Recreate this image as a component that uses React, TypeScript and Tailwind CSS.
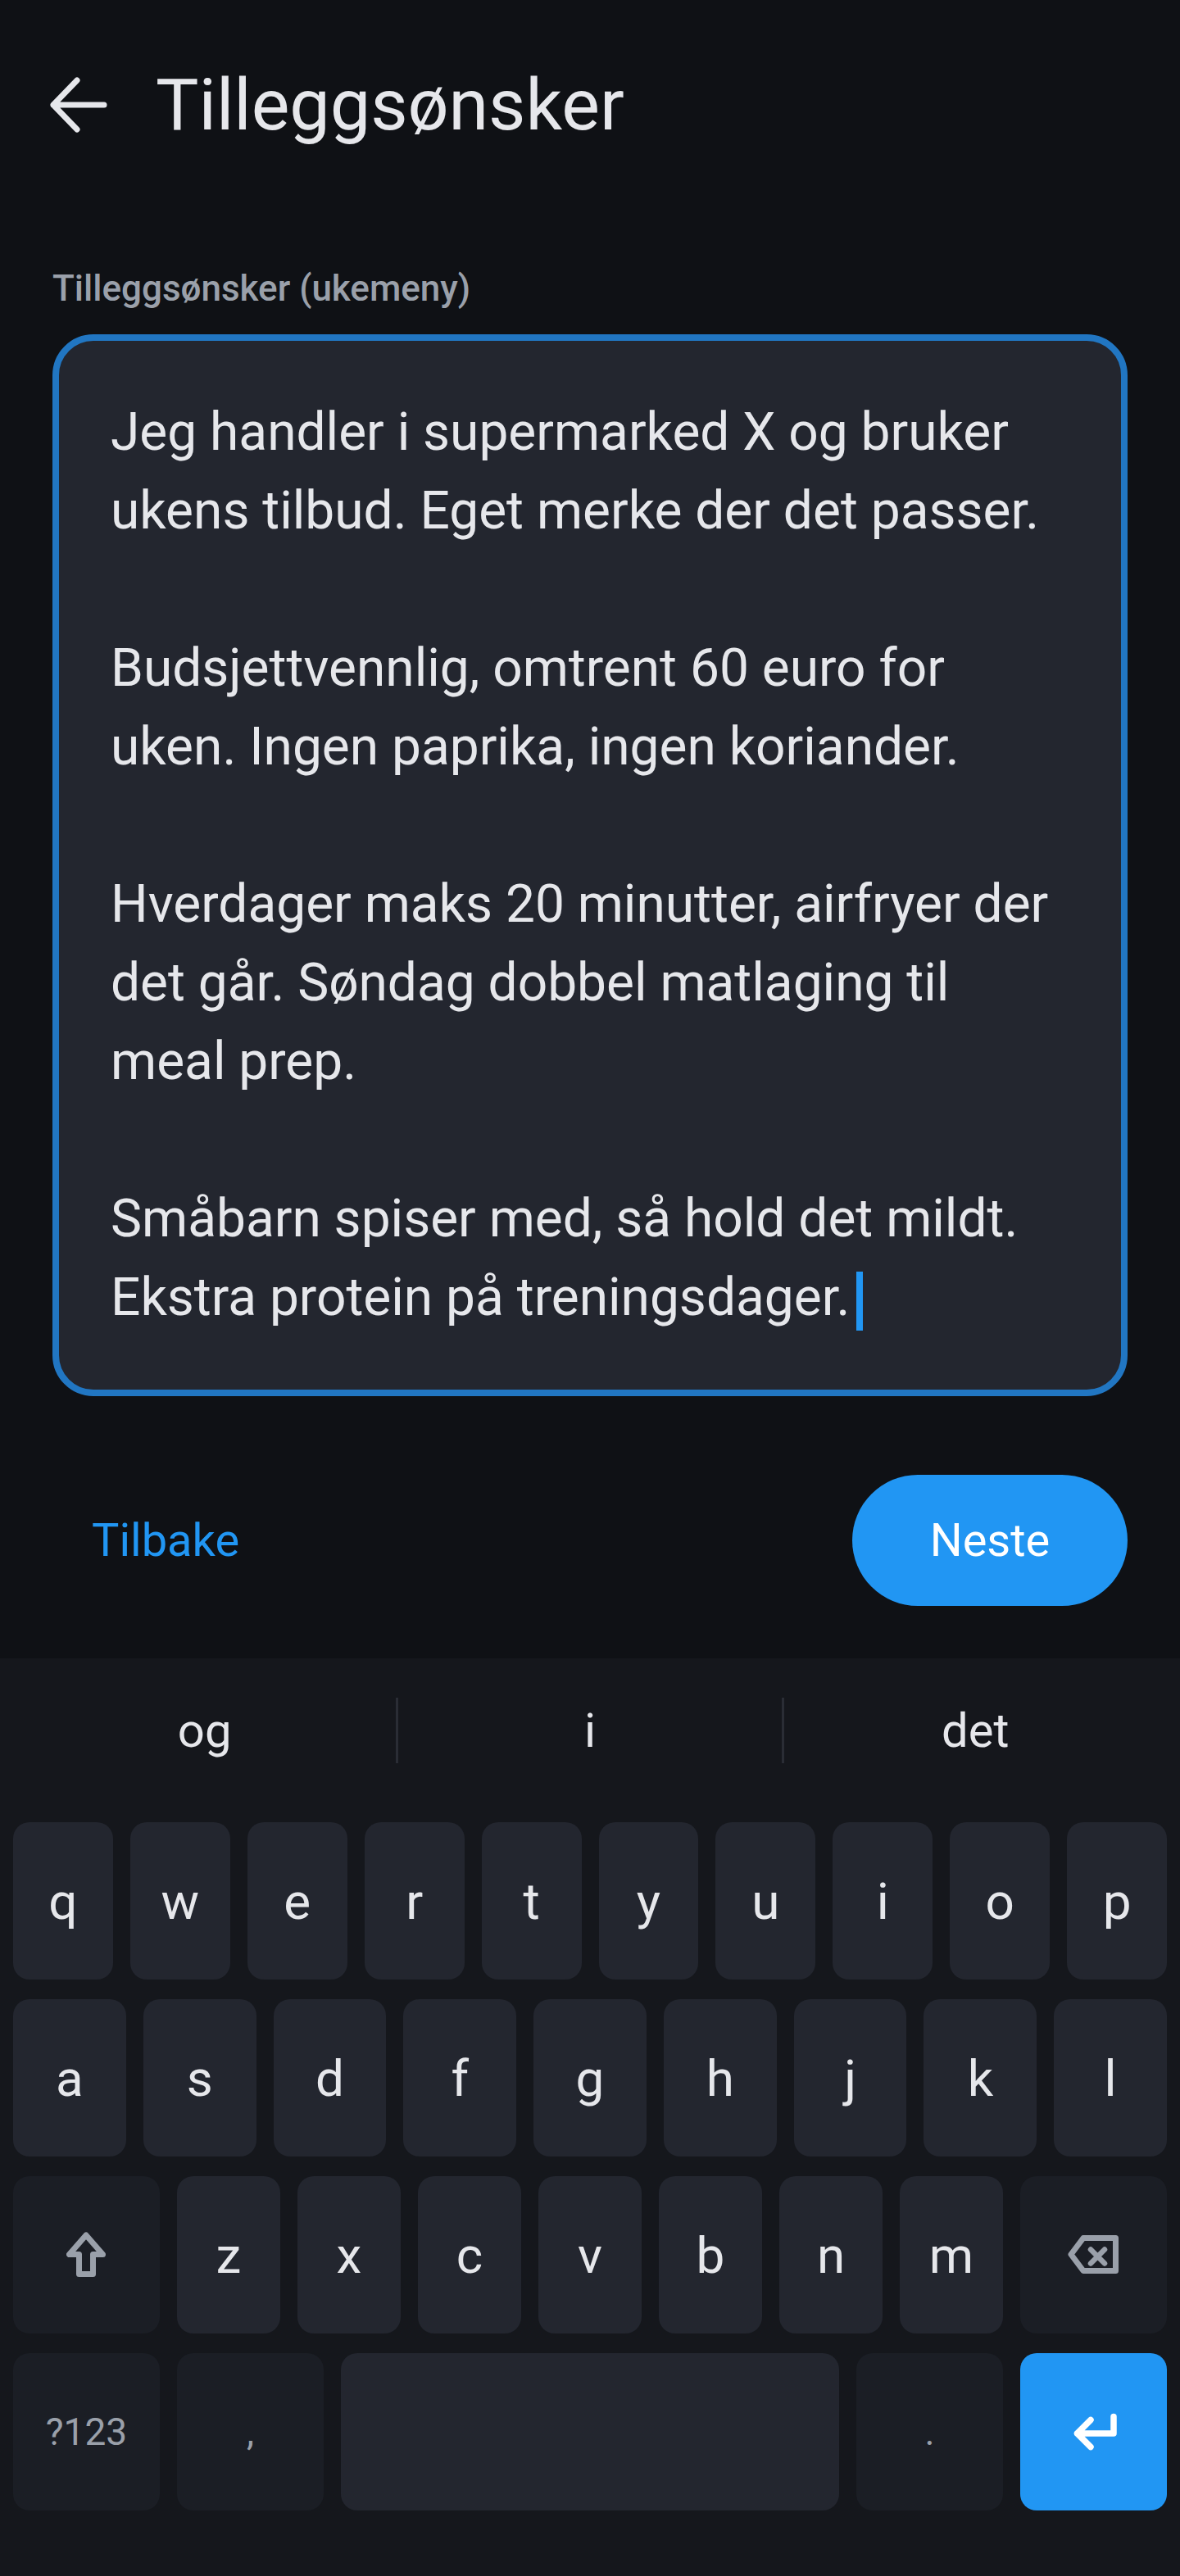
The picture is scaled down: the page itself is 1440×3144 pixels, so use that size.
import { useState } from "react"

const row1 = ["q", "w", "e", "r", "t", "y", "u", "i", "o", "p"]
const row2 = ["a", "s", "d", "f", "g", "h", "j", "k", "l"]
const row3 = ["z", "x", "c", "v", "b", "n", "m"]

const noteText = `Jeg handler i supermarked X og bruker
ukens tilbud. Eget merke der det passer.

Budsjettvennlig, omtrent 60 euro for
uken. Ingen paprika, ingen koriander.

Hverdager maks 20 minutter, airfryer der
det går. Søndag dobbel matlaging til
meal prep.

Småbarn spiser med, så hold det mildt.
Ekstra protein på treningsdager.`

function Key({ label }: { label: string }) {
  return (
    <div className="flex-1 h-full rounded-[20px] bg-[#23262f] flex items-center justify-center text-[62px] text-[#e6e7eb]">
      {label}
    </div>
  )
}

function ShiftIcon() {
  return (
    <svg width="50" height="57" viewBox="0 0 50 57" fill="none">
      <path
        d="M24 4 L3.5 27.5 H15.5 V51.5 H32.5 V27.5 H44.5 Z"
        stroke="#9aa0aa"
        strokeWidth="7"
        strokeLinejoin="round"
      />
    </svg>
  )
}

function BackspaceIcon() {
  return (
    <svg width="64" height="48" viewBox="0 0 64 48" fill="none">
      <path
        d="M19 3.5 H58.5 V43.5 H19 L4 23.5 Z"
        stroke="#9aa0aa"
        strokeWidth="7"
        strokeLinejoin="round"
      />
      <path
        d="M28 17.5 L45 34.5 M45 17.5 L28 34.5"
        stroke="#9aa0aa"
        strokeWidth="6.5"
        strokeLinecap="round"
      />
    </svg>
  )
}

function EnterIcon() {
  return (
    <svg width="56" height="48" viewBox="0 0 56 48" fill="none" className="ml-[5px]">
      <path
        d="M50 5.5 V26 H5.5 M22 9.5 L5.5 26 L22 42.5"
        stroke="#ffffff"
        strokeWidth="7.5"
        strokeLinecap="round"
        strokeLinejoin="round"
      />
    </svg>
  )
}

export default function App() {
  const [text] = useState(noteText)

  return (
    <div className="w-full min-h-[3144px] bg-[#0f1115] font-[Roboto,sans-serif] flex flex-col">
      {/* Top bar */}
      <div className="h-[256px] flex items-center px-[48px]">
        <button className="w-[96px] h-[96px] flex items-center justify-center">
          <svg width="70" height="70" viewBox="0 0 70 70" fill="none">
            <path
              d="M66 35 H4 M33 5 L4 35 L33 65"
              stroke="#e6e7eb"
              strokeWidth="7"
              strokeLinecap="round"
              strokeLinejoin="round"
            />
          </svg>
        </button>
        <h1 className="ml-[46px] text-[88px] leading-[88px] text-[#e6e7eb] font-normal">Tilleggsønsker</h1>
      </div>

      {/* Form */}
      <div className="px-16">
        <label className="block mt-16 text-[44px] leading-[64px] text-[#9aa0aa] font-medium">
          Tilleggsønsker (ukemeny)
        </label>

        <div className="mt-6 rounded-[50px] border-[8px] border-[#2176c2] bg-[#23262f] px-[63px] py-[64px]">
          <div className="whitespace-pre-line text-[64px] leading-[96px] text-[#e6e7eb]">
            {text}
            <span className="inline-block w-[8px] h-[72px] bg-[#2196f3] align-middle ml-[8px]" />
          </div>
        </div>

        <div className="mt-24 flex items-center justify-between">
          <button className="pl-[48px] text-[56px] leading-[64px] text-[#2196f3] font-normal">Tilbake</button>
          <button className="w-[336px] h-[160px] rounded-full bg-[#2196f3] text-white text-[56px] leading-[64px] font-normal">
            Neste
          </button>
        </div>
      </div>

      {/* Keyboard */}
      <div className="mt-16 bg-[#15171c] pb-20">
        <div className="h-[176px] px-4 flex items-center">
          <div className="flex-1 text-center text-[58px] text-[#e6e7eb]">og</div>
          <div className="w-[3px] h-[80px] bg-[#2a2d35]" />
          <div className="flex-1 text-center text-[58px] text-[#e6e7eb]">i</div>
          <div className="w-[3px] h-[80px] bg-[#2a2d35]" />
          <div className="flex-1 text-center text-[58px] text-[#e6e7eb]">det</div>
        </div>

        <div className="px-4 pt-6 flex flex-col gap-6">
          <div className="h-[192px] flex gap-[21px]">
            {row1.map((k) => (
              <Key key={k} label={k} />
            ))}
          </div>
          <div className="h-[192px] flex gap-[21px]">
            {row2.map((k) => (
              <Key key={k} label={k} />
            ))}
          </div>
          <div className="h-[192px] flex gap-[21px]">
            <div className="w-[179px] shrink-0 rounded-[20px] bg-[#1b1e25] flex items-center justify-center">
              <ShiftIcon />
            </div>
            {row3.map((k) => (
              <Key key={k} label={k} />
            ))}
            <div className="w-[179px] shrink-0 rounded-[20px] bg-[#1b1e25] flex items-center justify-center">
              <BackspaceIcon />
            </div>
          </div>
          <div className="h-[192px] flex gap-[21px]">
            <div className="w-[179px] shrink-0 rounded-[20px] bg-[#1b1e25] flex items-center justify-center text-[46px] text-[#9aa0aa]">
              ?123
            </div>
            <div className="w-[179px] shrink-0 rounded-[20px] bg-[#1b1e25] flex items-center justify-center text-[46px] text-[#9aa0aa]">
              ,
            </div>
            <div className="flex-1 rounded-[20px] bg-[#23262f]" />
            <div className="w-[179px] shrink-0 rounded-[20px] bg-[#1b1e25] flex items-center justify-center text-[46px] text-[#9aa0aa]">
              .
            </div>
            <div className="w-[179px] shrink-0 rounded-[20px] bg-[#2196f3] flex items-center justify-center">
              <EnterIcon />
            </div>
          </div>
        </div>
      </div>
    </div>
  )
}
